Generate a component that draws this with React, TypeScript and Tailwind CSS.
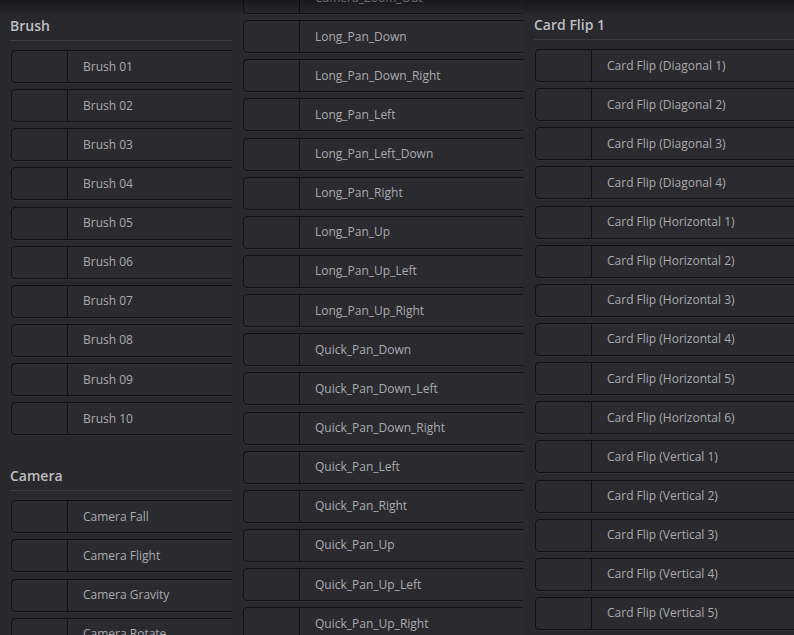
import React from "react";

const brush = ["Brush 01", "Brush 02", "Brush 03", "Brush 04", "Brush 05", "Brush 06", "Brush 07", "Brush 08", "Brush 09", "Brush 10"];
const camera = ["Camera Fall", "Camera Flight", "Camera Gravity", "Camera Rotate"];
const pans = [
  "Camera_Zoom_Out",
  "Long_Pan_Down",
  "Long_Pan_Down_Right",
  "Long_Pan_Left",
  "Long_Pan_Left_Down",
  "Long_Pan_Right",
  "Long_Pan_Up",
  "Long_Pan_Up_Left",
  "Long_Pan_Up_Right",
  "Quick_Pan_Down",
  "Quick_Pan_Down_Left",
  "Quick_Pan_Down_Right",
  "Quick_Pan_Left",
  "Quick_Pan_Right",
  "Quick_Pan_Up",
  "Quick_Pan_Up_Left",
  "Quick_Pan_Up_Right",
];
const cardFlip = [
  "Card Flip (Diagonal 1)",
  "Card Flip (Diagonal 2)",
  "Card Flip (Diagonal 3)",
  "Card Flip (Diagonal 4)",
  "Card Flip (Horizontal 1)",
  "Card Flip (Horizontal 2)",
  "Card Flip (Horizontal 3)",
  "Card Flip (Horizontal 4)",
  "Card Flip (Horizontal 5)",
  "Card Flip (Horizontal 6)",
  "Card Flip (Vertical 1)",
  "Card Flip (Vertical 2)",
  "Card Flip (Vertical 3)",
  "Card Flip (Vertical 4)",
  "Card Flip (Vertical 5)",
  "Card Flip (Vertical 6)",
];

// each row runs past its column so the right end is clipped, as in the panel
function Item({ label }: { label: string }) {
  return (
    <div className="flex h-[33px] w-[320px] shrink-0 rounded-[4px] border border-[#111114] bg-[#2a2a2f] shadow-[0_1px_0_rgba(255,255,255,0.035)]">
      <div className="w-[56px] shrink-0 border-r border-[#111114]" />
      <div className="flex items-center whitespace-nowrap pl-[15px] text-[12px] text-[#ababaf]">{label}</div>
    </div>
  );
}

function Section({ title, items, className = "" }: { title: string; items: string[]; className?: string }) {
  return (
    <div className={className}>
      <div className="border-b border-[#3b3b41] pb-[4px] text-[14px] font-semibold leading-[20px] text-[#bebec2] whitespace-nowrap">
        {title}
      </div>
      <div className="mt-[9px] ml-px flex flex-col gap-[6.15px]">
        {items.map((i) => (
          <Item key={i} label={i} />
        ))}
      </div>
    </div>
  );
}

export default function App() {
  return (
    <div
      className="relative h-[635px] w-[794px] overflow-hidden bg-[#28282d]"
      style={{ fontFamily: '"Open Sans", "Noto Sans", sans-serif' }}
    >
      <div className="flex">
        {/* column 1 */}
        <div className="w-[232px] shrink-0 overflow-hidden pl-[10px] pt-[16px]">
          <Section title="Brush" items={brush} />
          <Section title="Camera" items={camera} className="mt-[31px]" />
        </div>

        {/* column 2 */}
        <div className="ml-[11px] w-[280px] shrink-0 overflow-hidden">
          <div className="-mt-[19px] flex flex-col gap-[6.15px]">
            {pans.map((p) => (
              <Item key={p} label={p} />
            ))}
          </div>
        </div>

        {/* column 3 */}
        <div className="ml-[11px] w-[270px] shrink-0 overflow-hidden pt-[15px]">
          <Section title="Card Flip 1" items={cardFlip} />
        </div>
      </div>

      {/* top shade */}
      <div className="pointer-events-none absolute inset-x-0 top-0 h-[16px] bg-gradient-to-b from-black/40 to-transparent" />
    </div>
  );
}
